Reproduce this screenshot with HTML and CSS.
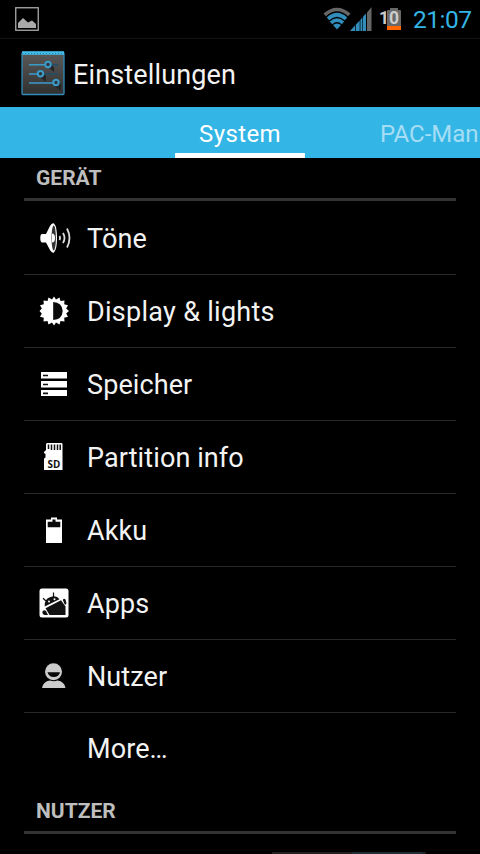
FILE: index.html
```html
<!DOCTYPE html>
<html lang="de">
<head>
<meta charset="utf-8">
<title>Einstellungen</title>
<link rel="stylesheet" href="styles.css">
</head>
<body>
<div class="screen">
  <div class="status">
    <svg class="notif" width="24" height="24" viewBox="0 0 24 24"><rect x=".75" y=".75" width="22.5" height="22.5" fill="none" stroke="#aaa" stroke-width="1.3"/><path d="M3 21v-5l5-5 5 4.500 4-2 4 3.500v4z" fill="#aaa"/></svg>
    <svg class="wifi" width="28" height="24" viewBox="0 0 28 24"><g fill="none" stroke-width="3.600"><path d="M1.700 7.800Q14-2.800 26.300 7.800" stroke="#666"/><path d="M5 11.800Q14 3.700 23 11.800M8 15.800Q14 10.300 20 15.800" stroke="#318dbb"/></g><path d="M10 18q4-3 8 0l-4 4.500z" fill="#318dbb"/></svg>
    <svg class="signal" width="22" height="24" viewBox="0 0 22 24"><path d="M0 24l5-5.500V24zM5.700 17.800L9.700 13.500V24h-4zM10.400 12.700l2-2.200V24h-2zM13 9.800l3-3.300V24h-3z" fill="#318dbb"/><path d="M17 5.500L21.500 0v24H17z" fill="#666"/></svg>
    <div class="battery">
      <svg width="14" height="24" viewBox="0 0 14 24"><path d="M0 4q0-1 1-1h2V1h8v2h2q1 0 1 1v19H0z" fill="#686868"/><path d="M0 19h14v4H0z" fill="#ff6500"/></svg>
      <span class="level">10</span>
    </div>
    <span class="clock">21:07</span>
  </div>
  <header class="bar">
    <svg class="app" width="44" height="45" viewBox="0 0 44 45">
      <defs><linearGradient id="g" x1="0" y1="0" x2="0" y2="1"><stop offset="0" stop-color="#5a5a5a"/><stop offset="1" stop-color="#303030"/></linearGradient></defs>
      <rect x="1" y="1.500" width="42" height="42" rx="1" fill="url(#g)" stroke="#318dbb" stroke-width="1.300"/>
      <path d="M1 2h42" stroke="#45bdea" stroke-width="3.500"/><path d="M1 2.500h42" stroke="#247fa8" stroke-width="1" stroke-dasharray="1 2"/>
      <path d="M28 17l5 4v-5l-3-2zM20 27l5 4v-6l-2-2zM34 36l6 4v-7l-3-2z" fill="#262626"/>
      <g fill="none" stroke="#3b9bcb" stroke-width="1.600"><path d="M8 13.800h16M8 23h9M8 32h24"/><path d="M30 13.800h7M23 23h14" stroke="#1f4f66"/></g>
      <g fill="#333" stroke="#3b9bcb" stroke-width="2"><circle cx="27" cy="13.500" r="2.700"/><circle cx="19.500" cy="22.700" r="2.700"/><circle cx="35" cy="31.500" r="2.700"/></g>
    </svg>
    <h1>Einstellungen</h1>
  </header>
  <nav class="tabs"><span class="spacer"></span><span class="tab active"><span>System</span></span><span class="tab next"><span>PAC-Man</span></span></nav>
  <main class="list">
    <h2 class="device"><span>GERÄT</span></h2>
    <ul>
      <li><svg width="34" height="34" viewBox="0 0 34 34"><path d="M4 13q-1.700 0-1.700 4T4 21.500h4l4 7.500q2 3.500 4 2.500 3-3 3-14.500T16 2.500q-2-1-4 2.500L8 13z" fill="#fff"/><ellipse cx="15.700" cy="17" rx="2.200" ry="12.500" fill="#333"/><path d="M14 12.500q3 0 3 4.500t-3 4.500z" fill="#fff"/><g fill="none" stroke="#ddd" stroke-width="1.800"><path d="M21.500 15q1 2 0 4M25 12q3 5 0 10M29 7.500q5 9.500 0 19"/></g></svg><span>Töne</span></li>
      <li><svg width="34" height="34" viewBox="0 0 34 34"><path fill="#fff" d="M16 2.500l2 3 3.500-2 1 3.500 4-.4-.3 3.700 3.800 1-1.800 3.200L31 17l-2.800 2.500 1.800 3.200-3.800 1 .3 3.700-4-.4-1 3.500-3.500-2-2 3-2-3-3.500 2-1-3.500-4 .4.300-3.700-3.800-1 1.800-3.200L1.500 17l2.300-2.500L2 11.300l3.800-1-.3-3.700 4 .4 1-3.500 3.500 2z"/><path d="M15.200 8q9 .5 9.500 9-.5 8.500-9.500 9z" fill="#0a0a0a"/></svg><span class="wide">Display &amp; lights</span></li>
      <li><svg width="34" height="34" viewBox="0 0 34 34"><path d="M3 5h26v6.500H3zM3 14h26v6.500H3zM3 23h26v6H3z" fill="#fff"/><path d="M5 8.500h5M5 17.500h5M5 26.300h5" stroke="#111" stroke-width="1.700"/></svg><span>Speicher</span></li>
      <li><svg width="34" height="34" viewBox="0 0 34 34"><path d="M9 3h14.500q1 0 1 1v26H6V18.500l1.500-1V14L6 13V12l2-2V4z" fill="#fff"/><path d="M10.500 4.500v4.500M13.500 4.500v5.500M16.500 4.500v5.500M19.500 4.500v5.500M22.200 4.500v5.500" stroke="#111" stroke-width="1.500"/><text x="9.500" y="27.700" textLength="13" lengthAdjust="spacingAndGlyphs" class="sd">SD</text></svg><span>Partition info</span></li>
      <li><svg width="34" height="34" viewBox="0 0 34 34"><path d="M8 6.500h5v-2h6v2h5V30H8z" fill="#fff"/><path d="M9.700 8.700h4.800V6.500h3v2.200h4.800v5.600H9.700z" fill="#0a0a0a"/></svg><span>Akku</span></li>
      <li><svg width="34" height="34" viewBox="0 0 34 34"><rect x="1.500" y="2.500" width="29" height="29" rx="2.500" fill="#fff"/><g fill="#111"><path d="M6.700 20.500q-.7-7.500 5.800-9.500 6-2 9 2.300z"/><path d="M7.500 22.300L23 14.300l4.500 6.200V29H11.500z"/><path d="M24.800 14q1-2 2.700-.5l1 4-1.500 1.500zM4.500 25.500q1.500-2 3.500-.5l2 4H6.500q-2.500-1-2-3.500z"/></g><path d="M8 15l-3-2.700M15.500 11V6.500" stroke="#111" stroke-width="1.200"/><circle cx="11" cy="15.500" r="1" fill="#fff"/><circle cx="16.500" cy="13.200" r="1" fill="#fff"/></svg><span>Apps</span></li>
      <li><svg width="34" height="34" viewBox="0 0 34 34"><circle cx="15.500" cy="12.700" r="8.500" fill="#ccc"/><path d="M9.500 13.300h12.500q-1 4.700-6.200 4.700t-6.300-4.700z" fill="#080808"/><path d="M4 29q1-6.500 8-7.500 4 1.500 7.500 0 7 1 8 7.500z" fill="#ccc"/></svg><span>Nutzer</span></li>
      <li class="more"><span>More…</span></li>
    </ul>
    <h2 class="user"><span>NUTZER</span></h2>
    <div class="switch"><i></i></div>
  </main>
</div>
</body>
</html>
```
FILE: styles.css
```css
* { box-sizing: border-box; }
body { margin: 0; background: #000; }
.screen {
  width: 480px;
  height: 854px;
  overflow: hidden;
  display: flex;
  flex-direction: column;
  background: #000;
  color: #f3f3f3;
  font-family: Roboto, "Liberation Sans", sans-serif;
}
svg { display: block; flex: none; }
.status {
  height: 39px;
  flex: none;
  display: flex;
  align-items: flex-start;
  padding: 7px 0 0 15px;
  border-bottom: 1px solid #121212;
}
.wifi { margin-left: 284px; }
.signal { margin-left: -1px; }
.battery { position: relative; margin-left: 15px; }
.level {
  position: absolute;
  left: -8px;
  top: 1px;
  font-size: 17.5px;
  line-height: 20px;
  font-weight: 700;
  color: #ccc;
}
.clock {
  margin-left: 12px;
  font-size: 24.5px;
  line-height: 26px;
  letter-spacing: -0.5px;
  color: #33b5e5;
}
.bar {
  height: 68px;
  flex: none;
  display: flex;
  align-items: center;
  padding-left: 21px;
}
h1 {
  margin: 3px 0 0 8px;
  font-size: 27px;
  line-height: 32px;
  font-weight: 400;
  letter-spacing: 0.14px;
}
.tabs {
  height: 51px;
  flex: none;
  display: flex;
  background: #33b5e5;
  overflow: hidden;
  font-size: 24px;
  line-height: 51px;
}
.spacer { width: 175px; flex: none; }
.tab { flex: none; text-align: center; padding-top: 2px; }
.active { width: 130px; color: #fff; border-bottom: 5px solid #fff; height: 51px; letter-spacing: 0.4px; }
.next { margin-left: 75px; color: #a5def4; }
h2 {
  margin: 0 24px;
  padding-left: 12px;
  font-size: 21px;
  line-height: 24px;
  font-weight: 700;
  color: #bebebe;
  border-bottom: 3px solid #333;
}
.device { height: 43px; padding-top: 8px; }
.user { height: 49px; padding-top: 14px; }
ul { list-style: none; margin: 1px 24px 0; padding: 0; }
li {
  height: 73px;
  display: flex;
  align-items: center;
  gap: 15px;
  padding-left: 14px;
  border-bottom: 1px solid #272727;
  font-size: 27px;
  line-height: 32px;
  letter-spacing: 0.1px;
}
li span { padding-top: 2px; }
.wide { letter-spacing: 0.28px; }
.more { height: 72px; padding-left: 63px; border: 0; }
.more span { padding-top: 0; }
.sd { font: 700 11px "Open Sans", sans-serif; fill: #111; }
.switch {
  width: 154px;
  height: 20px;
  margin: 18px 0 0 272px;
  padding-left: 80px;
  background: #202020;
}
.switch i { display: block; width: 71px; height: 20px; background: #242c34; }
```
